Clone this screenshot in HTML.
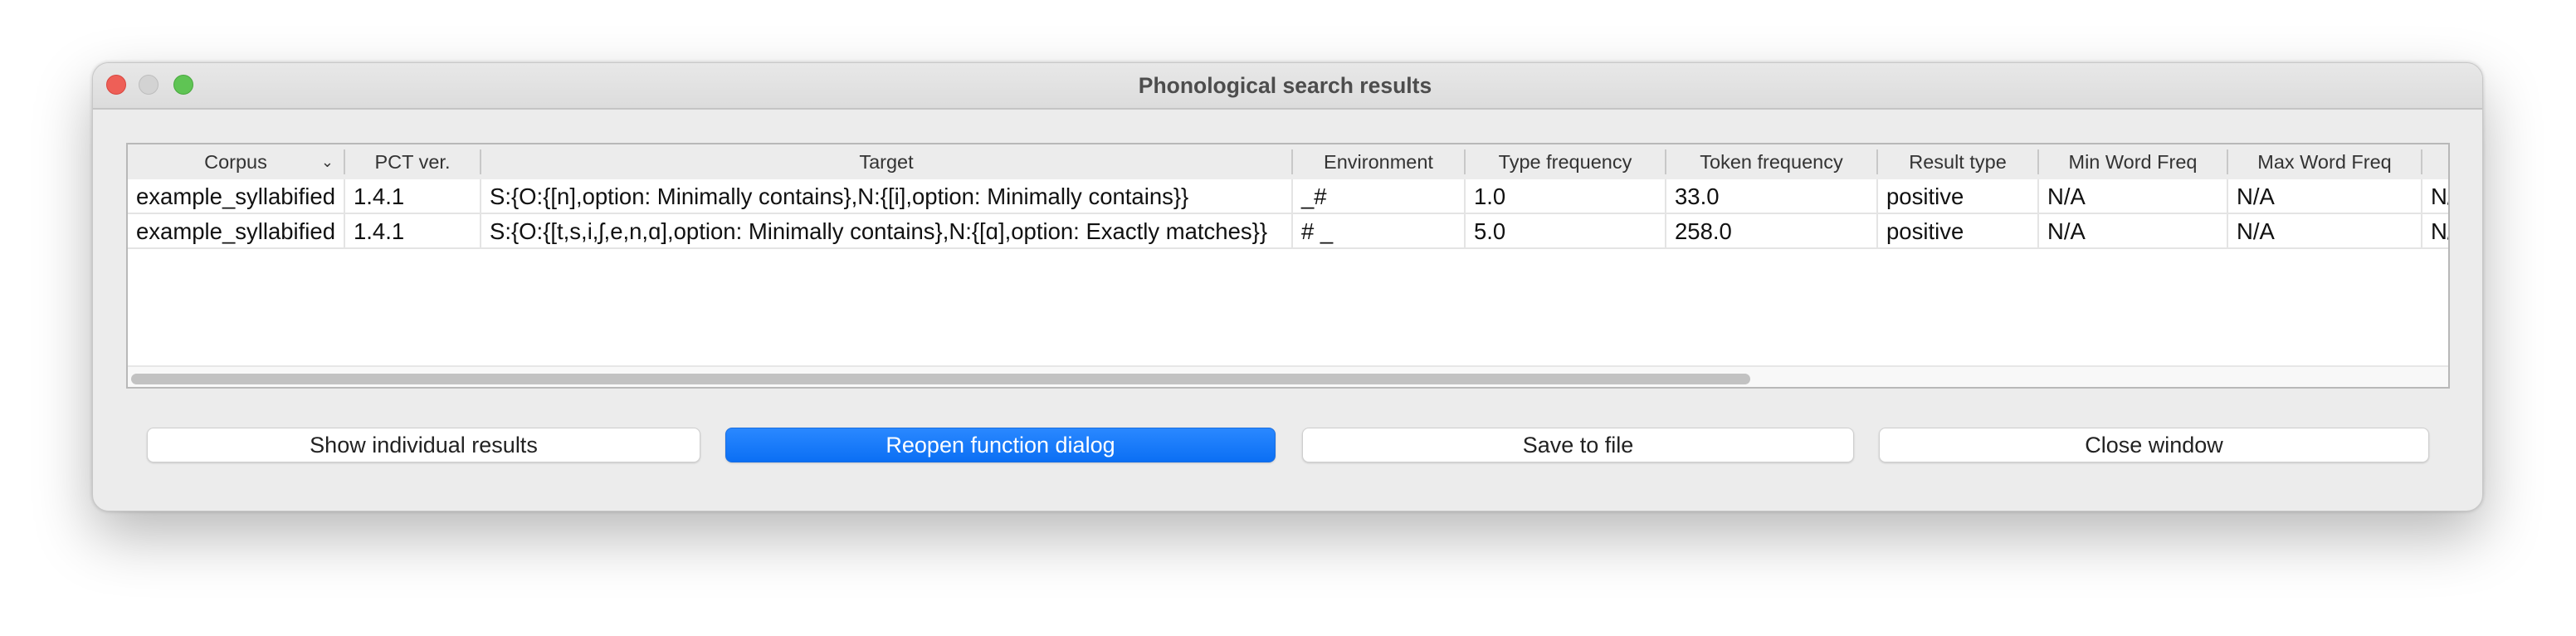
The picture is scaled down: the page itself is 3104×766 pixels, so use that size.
<!DOCTYPE html>
<html><head><style>
*{box-sizing:border-box;margin:0;padding:0}
body{width:3104px;height:766px;background:#fff;position:relative;overflow:hidden;font-family:"Liberation Sans",sans-serif;}
.win{position:absolute;left:111px;top:75px;width:2881px;height:541px;border-radius:20px;background:#ececec;border:1px solid #c8c8c8;box-shadow:0 30px 70px rgba(0,0,0,0.28),0 0 4px rgba(0,0,0,0.2);overflow:hidden}
.tb{position:absolute;left:0;top:0;right:0;height:56px;background:linear-gradient(#e8e8e8,#dcdcdc);border-bottom:2px solid #c4c4c4;text-align:center;line-height:54px;font-size:26.5px;font-weight:bold;color:#4d4d4d;padding-right:6px}
.dot{position:absolute;top:14px;width:24px;height:24px;border-radius:50%}
.tbl{position:absolute;left:40px;top:96px;width:2800px;height:296px;background:#fff;border:2px solid #b8b8b8;overflow:hidden}
.row{position:absolute;left:0;height:42px;white-space:nowrap}
.c{position:absolute;top:0;height:42px;line-height:42px;font-size:27.5px;color:#111;padding-left:10px;overflow:hidden;border-right:2px solid #e4e4e4}
.hdr{top:0;background:#ececec;height:42px}
.hdr .c{text-align:center;padding-left:0;font-size:23.5px;color:#333;border-right:2px solid #c8c8c8;top:6px;height:30px;line-height:30px}
.r1{top:42px;border-bottom:2px solid #e4e4e4;width:100%}
.r2{top:84px;border-bottom:2px solid #e4e4e4;width:100%}
.sb{position:absolute;left:0;right:0;top:266px;height:28px;background:#f8f8f8;border-top:2px solid #e6e6e6}
.th{position:absolute;left:4px;top:8px;width:1951px;height:13px;border-radius:7px;background:#c2c2c2}
.btn{position:absolute;top:439px;height:42px;border-radius:8px;background:#fff;border:1px solid #cfcfcf;box-shadow:0 1px 2px rgba(0,0,0,0.15);text-align:center;line-height:40px;font-size:27px;color:#222}
.blue{background:linear-gradient(#2a88ff,#0b6ff4);color:#fff;border-color:#1a6ee0}
</style></head><body>
<div class="win">
<div class="tb">Phonological search results
<div class="dot" style="left:16px;background:#ee5f57;border:1px solid #d8463f"></div>
<div class="dot" style="left:55px;background:#d3d3d3;border:1px solid #bdbdbd"></div>
<div class="dot" style="left:97px;background:#5fc454;border:1px solid #48a83e"></div>
</div>
<div class="tbl">
<div class="row hdr" style="width:100%">
<div class="c" style="left:0;width:262px">Corpus<span style="position:absolute;right:12px;font-size:18px">&#8964;</span></div>
<div class="c" style="left:262px;width:164px">PCT ver.</div>
<div class="c" style="left:426px;width:978px">Target</div>
<div class="c" style="left:1404px;width:208px">Environment</div>
<div class="c" style="left:1612px;width:242px">Type frequency</div>
<div class="c" style="left:1854px;width:255px">Token frequency</div>
<div class="c" style="left:2109px;width:194px">Result type</div>
<div class="c" style="left:2303px;width:228px">Min Word Freq</div>
<div class="c" style="left:2531px;width:234px">Max Word Freq</div>
</div>
<div class="row r1">
<div class="c" style="left:0;width:262px">example_syllabified</div>
<div class="c" style="left:262px;width:164px">1.4.1</div>
<div class="c" style="left:426px;width:978px">S:{O:{[n],option: Minimally contains},N:{[i],option: Minimally contains}}</div>
<div class="c" style="left:1404px;width:208px">_#</div>
<div class="c" style="left:1612px;width:242px">1.0</div>
<div class="c" style="left:1854px;width:255px">33.0</div>
<div class="c" style="left:2109px;width:194px">positive</div>
<div class="c" style="left:2303px;width:228px">N/A</div>
<div class="c" style="left:2531px;width:234px">N/A</div>
<div class="c" style="left:2765px;width:40px">N/A</div>
</div>
<div class="row r2">
<div class="c" style="left:0;width:262px">example_syllabified</div>
<div class="c" style="left:262px;width:164px">1.4.1</div>
<div class="c" style="left:426px;width:978px">S:{O:{[t,s,i,ʃ,e,n,ɑ],option: Minimally contains},N:{[ɑ],option: Exactly matches}}</div>
<div class="c" style="left:1404px;width:208px"># _</div>
<div class="c" style="left:1612px;width:242px">5.0</div>
<div class="c" style="left:1854px;width:255px">258.0</div>
<div class="c" style="left:2109px;width:194px">positive</div>
<div class="c" style="left:2303px;width:228px">N/A</div>
<div class="c" style="left:2531px;width:234px">N/A</div>
<div class="c" style="left:2765px;width:40px">N/A</div>
</div>
<div class="sb"><div class="th"></div></div>
</div>
<div class="btn" style="left:65px;width:667px">Show individual results</div>
<div class="btn blue" style="left:762px;width:663px">Reopen function dialog</div>
<div class="btn" style="left:1457px;width:665px">Save to file</div>
<div class="btn" style="left:2152px;width:663px">Close window</div>
</div>
</body></html>
